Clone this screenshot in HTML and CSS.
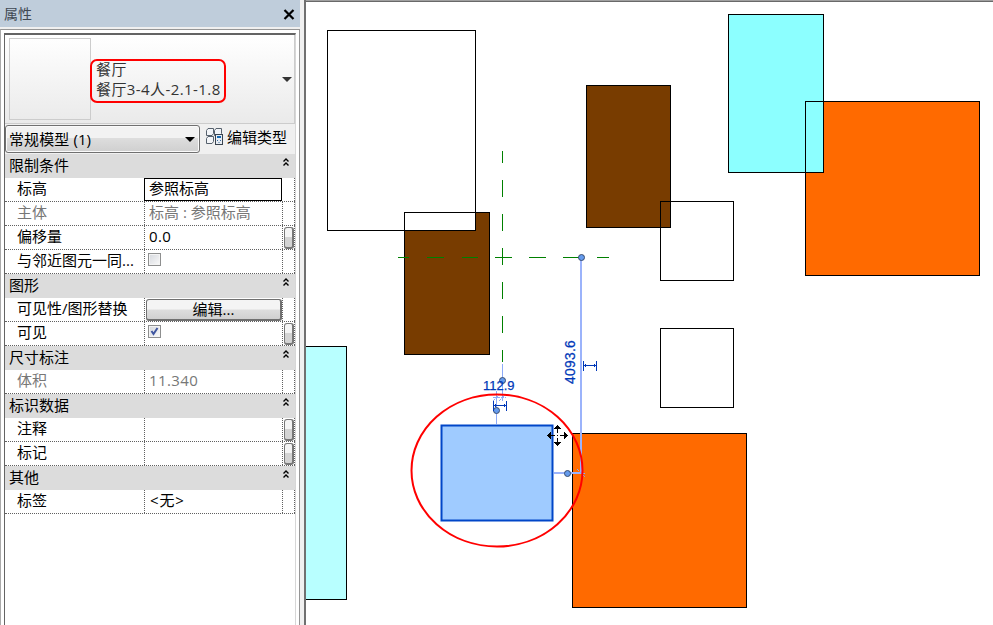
FILE: index.html
```html
<!DOCTYPE html>
<html lang="zh-CN">
<head>
<meta charset="utf-8">
<title>属性</title>
<link rel="stylesheet" href="styles.css">
</head>
<body>
<div class="app">
  <aside class="panel">
    <header class="titlebar"><span>属性</span>
      <svg class="close" width="12" height="11" viewBox="0 0 12 11"><path d="M1.5 1L10.5 10M10.5 1L1.5 10" stroke="#000" stroke-width="2.2"/></svg>
    </header>
    <div class="frame">
      <div class="content">
        <div class="type-selector">
          <div class="thumb"></div>
          <div class="type-name"><div>餐厅</div><div>餐厅3-4人-2.1-1.8</div></div>
          <svg class="drop" width="10" height="5" viewBox="0 0 10 5"><path d="M0 0H10L5 5Z" fill="#333"/></svg>
        </div>
        <div class="filter">
          <div class="combo"><span>常规模型 (1)</span><svg width="10" height="5" viewBox="0 0 10 5"><path d="M0 0H10L5 5Z"/></svg></div>
          <svg class="edit-icon" width="17" height="17" viewBox="0 0 17 17" fill="none">
            <g stroke="#56616d" fill="#f3f5f8"><path d="M.5 2.5L2 .5H7.500V5.500L6 7.500H.5ZM8.500 2.500L10 .5H15.500V5.500L14 7.500H8.500ZM.5 10.500L2 8.500H7.500V13.500L6 15.500H.5Z"/></g>
            <rect x="9.500" y="6.500" width="7" height="10" fill="#e8edf4" stroke="#39434f"/>
            <path d="M11 9H15" stroke="#1769b0" stroke-width="2"/><path d="M11 12.500H12M14 12.500H15M12.500 14.500H13.500" stroke="#3f6f9f"/>
          </svg>
          <span class="edit-type">编辑类型</span>
        </div>
        <div class="grid">
          <div class="group"><span>限制条件</span><svg class="chev" width="6" height="8" viewBox="0 0 6 8"><path d="M.5 3.500L3 1L5.500 3.500M.5 7.500L3 5L5.500 7.500"/></svg></div>
          <div class="row"><div class="name">标高</div><div class="value active">参照标高</div><div class="side"></div></div>
          <div class="row muted"><div class="name">主体</div><div class="value">标高 : 参照标高</div><div class="side"></div></div>
          <div class="row"><div class="name">偏移量</div><div class="value number">0.0</div><div class="side"><i class="pill"></i></div></div>
          <div class="row"><div class="name">与邻近图元一同...</div><div class="value"><i class="check"></i></div><div class="side"></div></div>
          <div class="group"><span>图形</span><svg class="chev" width="6" height="8" viewBox="0 0 6 8"><path d="M.5 3.500L3 1L5.500 3.500M.5 7.500L3 5L5.500 7.500"/></svg></div>
          <div class="row"><div class="name">可见性/图形替换</div><div class="value holder"><div class="button">编辑...</div></div><div class="side"></div></div>
          <div class="row"><div class="name">可见</div><div class="value"><i class="check"><svg width="11" height="11" viewBox="0 0 11 11"><path d="M2.500 5L4.500 8L8.500 2" fill="none" stroke="#3f56a0" stroke-width="2"/></svg></i></div><div class="side"><i class="pill"></i></div></div>
          <div class="group"><span>尺寸标注</span><svg class="chev" width="6" height="8" viewBox="0 0 6 8"><path d="M.5 3.500L3 1L5.500 3.500M.5 7.500L3 5L5.500 7.500"/></svg></div>
          <div class="row muted"><div class="name">体积</div><div class="value number">11.340</div><div class="side"></div></div>
          <div class="group"><span>标识数据</span><svg class="chev" width="6" height="8" viewBox="0 0 6 8"><path d="M.5 3.500L3 1L5.500 3.500M.5 7.500L3 5L5.500 7.500"/></svg></div>
          <div class="row"><div class="name">注释</div><div class="value"></div><div class="side"><i class="pill"></i></div></div>
          <div class="row"><div class="name">标记</div><div class="value"></div><div class="side"><i class="pill"></i></div></div>
          <div class="group"><span>其他</span><svg class="chev" width="6" height="8" viewBox="0 0 6 8"><path d="M.5 3.500L3 1L5.500 3.500M.5 7.500L3 5L5.500 7.500"/></svg></div>
          <div class="row"><div class="name">标签</div><div class="value none">&lt;无&gt;</div><div class="side"></div></div>
        </div>
      </div>
    </div>
  </aside>
  <div class="splitter"></div>
  <main class="canvas">
    <svg class="drawing" width="687" height="623" viewBox="306 2 687 623">
      <g stroke="#000" fill="none" shape-rendering="crispEdges">
        <rect x="300.500" y="346.500" width="46" height="253" fill="#b8ffff"/>
        <rect x="404.500" y="212.500" width="85" height="142" fill="#783c00"/>
        <rect x="327.500" y="30.500" width="148" height="200" fill="#fff"/>
        <path d="M404.500 230V212.500H476"/>
        <rect x="660.500" y="201.500" width="73" height="79" fill="#fff"/>
        <rect x="586.500" y="85.500" width="84" height="142" fill="#783c00"/>
        <path d="M660.500 228V201.500H671"/>
        <rect x="660.500" y="328.500" width="73" height="79"/>
        <rect x="805.500" y="101.500" width="174" height="174" fill="#ff6a00"/>
        <rect x="728.500" y="14.500" width="95" height="158" fill="#8cffff"/>
        <path d="M805.500 172V101.500H823"/>
        <rect x="572.500" y="433.500" width="174" height="174" fill="#ff6a00"/>
      </g>
      <g stroke="#008000" shape-rendering="crispEdges">
        <path d="M398 257.500H409M427 257.500H444M462 257.500H478M495 257.500H512M529 257.500H546M563 257.500H580M597 257.500H609"/>
        <path d="M502.500 151V163M502.500 180V197M502.500 214V231M502.500 248V265M502.500 282V299M502.500 316V333M502.500 350V362"/>
      </g>
      <g fill="none" stroke="#8caaf8">
        <path d="M581 258V473M554 473H582" stroke-width="2" stroke="#9bb3fb"/>
        <path d="M502.500 364V401M496.500 391V424" />
        <path d="M493 401L500 394M499 401L506 394M493 397.500H506M577 469L585 477M582 473.500H586" stroke-dasharray="3 1"/>
      </g>
      <g fill="#659bed" stroke="#394c6e">
        <circle cx="502.500" cy="380.500" r="3"/><circle cx="496.500" cy="410.500" r="3"/>
        <circle cx="581.500" cy="257.500" r="3"/><circle cx="567.500" cy="473.500" r="3"/>
      </g>
      <g stroke="#0038b8" fill="none" shape-rendering="crispEdges">
        <path d="M583.500 361V371M596.500 361V371M584 365.500H596M585.500 364V367M594.500 364V367M493.500 401V411M506.500 401V411M494 405.500H506M495.500 404V407M504.500 404V407"/>
      </g>
      <text class="dimension" x="483" y="390">112.9</text>
      <text class="dimension vertical" transform="translate(575 384) rotate(-90)">4093.6</text>
      <rect x="441.500" y="425.500" width="111" height="95" fill="#9fcbff" stroke="#0046c8" stroke-width="2"/>
      <ellipse cx="497" cy="470.500" rx="85.500" ry="76" fill="none" stroke="#f00" stroke-width="2"/>
      <g class="cursor" shape-rendering="crispEdges">
        <path d="M549 435.500H555M560 435.500H566M557.500 427V433M557.500 438V444" stroke="#000"/>
        <path d="M547 435.500L551 432V439ZM568 435.500L564 432V439ZM557.500 425L554 429H561ZM557.500 446L554 442H561ZM557 435H558V436H557Z"/>
      </g>
    </svg>
  </main>
</div>
</body>
</html>
```
FILE: styles.css
```css
* { box-sizing: border-box; }
body { margin: 0; width: 993px; height: 625px; overflow: hidden; background: #fff; color: #000; font: 15px/22px "Open Sans", "Noto Sans CJK SC", sans-serif; }
svg { display: block; flex: none; }
.app { display: flex; height: 625px; }
.panel { width: 300px; display: flex; flex-direction: column; background: #f0f0f0; flex: none; }
.titlebar { height: 27px; background: #bfcddb; display: flex; justify-content: space-between; align-items: center; padding: 1px 5px 0 4px; color: #404852; font-size: 14px; }
.frame { margin-top: 2px; height: 596px; border: 1px solid #969696; border-bottom: 0; border-left-color: #aaa; padding: 3px 0 0 3px; background: #fff; }
.content { width: 292px; height: 592px; border: 1px solid #646464; border-width: 2px 1px 0; border-right-color: #d7d7d7; background: #fff; }
.type-selector { height: 89px; border-bottom: 1px solid #ccc; border-right: 1px solid #ccc; background: linear-gradient(#fff, #eaeaea); display: flex; padding: 3px 1px 3px 4px; color: #333; }
.thumb { width: 82px; height: 82px; border: 1px solid #ccc; flex: none; }
.type-name { flex: none; width: 136px; height: 44px; margin: 21px 0 0 -1px; border: 2px solid #f00; border-radius: 7px; line-height: 20px; padding-left: 4px; white-space: nowrap; letter-spacing: .42px; }
.type-name div { margin-top: -2px; height: 22px; }
.drop { margin: 39px 1px 0 auto; }
.filter { height: 30px; background: #f0f0f0; display: flex; }
.combo { width: 195px; height: 28px; margin-top: 1px; border: 1px solid #707070; border-radius: 3px; background: linear-gradient(#f2f2f2 0 45%, #ddd 48%, #cfcfcf); box-shadow: inset 0 0 0 1px #fafafa; display: flex; align-items: center; justify-content: space-between; padding: 0 4px 1px 3px; }
.combo span { letter-spacing: .1px; }
.combo svg { margin-top: 2px; }
.edit-icon { margin: 4px 0 0 6px; }
.edit-type { margin: 2px 0 0 4px; }
.group { height: 24px; background: #dcdcdc; display: flex; justify-content: space-between; padding: 0 6px 0 4px; }
.chev { margin-top: 4px; }
.chev path { fill: none; stroke: #000; stroke-width: 1.4; }
.row { height: 24px; display: grid; grid-template-columns: 140px 138px 12px; border-bottom: 1px dotted #606060; line-height: 21px; white-space: nowrap; }
.name { padding-left: 12px; border-right: 1px dotted #606060; }
.value { padding-left: 4px; border-right: 1px dotted #606060; }
.active { border: 1px solid #000; padding-left: 4px; line-height: 19px; margin: 0 1px 0 -1px; }
.number { letter-spacing: .4px; }
.none { padding-left: 5px; letter-spacing: .8px; }
.side { border-right: 1px dotted #606060; }
.muted { color: #777; }
.pill { display: block; width: 10px; height: 22px; margin: 1px 0 0 1px; border: 1px solid #777; border-right-width: 2px; border-bottom-width: 2px; border-radius: 3px; background: linear-gradient(#f4f4f4 50%, #d3d3d3 50%); }
.check { display: block; width: 13px; height: 13px; margin: 3px 0 0 -1px; border: 1px solid #8e8f8f; background: linear-gradient(135deg, #d5d8dd, #fafafa); box-shadow: inset 0 0 0 1px #f4f4f4; }
.holder { padding: 1px 0 0 1px; }
.button { height: 22px; border: 1px solid #707070; border-right-width: 2px; border-bottom-width: 2px; border-radius: 3px; background: linear-gradient(#f4f4f4 48%, #ddd 52%, #d0d0d0); text-align: center; line-height: 19px; }
.splitter { width: 6px; background: #f0f0f0; border-right: 2px solid #707070; flex: none; }
.canvas { width: 687px; border-top: 1px solid #a0a0a0; box-shadow: inset 0 1px #696969; padding-top: 1px; background: #fff; }
.dimension { font: 13px "Liberation Sans", sans-serif; fill: #0038b8; stroke: #0038b8; stroke-width: .25px; }
.vertical { font-size: 13.8px; letter-spacing: .3px; }
```
